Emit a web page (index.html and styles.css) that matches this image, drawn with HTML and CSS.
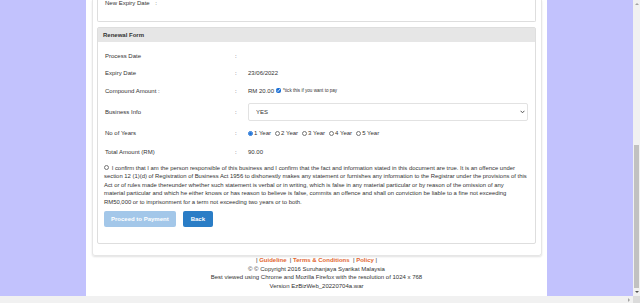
FILE: index.html
```html
<!DOCTYPE html>
<html lang="en">
<head>
  <meta charset="UTF-8">
  <meta name="viewport" content="width=device-width, initial-scale=1">
  <title>Renewal Form</title>
  <link rel="stylesheet" href="styles.css">
</head>
<body>
  <div class="screen">
    <div class="viewport">
      <div class="side"></div>

      <main class="page">
        <div class="well">
          <!-- tail of the details panel, scrolled up -->
          <section class="panel panel-top">
            <div class="expiry-line">New Expiry Date <span class="expiry-colon">:</span></div>
          </section>

          <!-- RENEWAL FORM -->
          <section class="panel">
            <h2 class="panel-head">Renewal Form</h2>
            <div class="panel-body">
              <div class="form-row row-process">
                <div class="label">Process Date</div>
                <div class="colon">:</div>
                <div class="value"></div>
              </div>
              <div class="form-row row-expiry">
                <div class="label">Expiry Date</div>
                <div class="colon">:</div>
                <div class="value">23/06/2022</div>
              </div>
              <div class="form-row row-compound">
                <div class="label">Compound Amount :</div>
                <div class="colon">:</div>
                <div class="value">RM 20.00 <input type="checkbox" class="tick" checked> <span class="note">*tick this if you want to pay</span></div>
              </div>
              <div class="form-row row-business">
                <div class="label">Business Info</div>
                <div class="colon">:</div>
                <div class="value">
                  <div class="select-wrap">
                    <select class="select">
                      <option>YES</option>
                      <option>NO</option>
                    </select>
                    <svg class="chevron" width="5" height="4" viewBox="0 0 5 4"><path d="M0.6 0.8 L2.5 2.8 L4.4 0.8" fill="none" stroke="#555" stroke-width="1"/></svg>
                  </div>
                </div>
              </div>
              <div class="form-row row-years">
                <div class="label">No of Years</div>
                <div class="colon">:</div>
                <div class="value years">
                  <label><input type="radio" name="years" checked> 1 Year</label>
                  <label><input type="radio" name="years"> 2 Year</label>
                  <label><input type="radio" name="years"> 3 Year</label>
                  <label><input type="radio" name="years"> 4 Year</label>
                  <label><input type="radio" name="years"> 5 Year</label>
                </div>
              </div>
              <div class="form-row row-total">
                <div class="label">Total Amount (RM)</div>
                <div class="colon">:</div>
                <div class="value">90.00</div>
              </div>

              <p class="declaration"><input type="checkbox" class="agree"> I confirm that I am the person responsible of this business and I confirm that the fact and information stated in this document are true. It is an offence under section 12 (1)(d) of Registration of Business Act 1956 to dishonestly makes any statement or furnishes any information to the Registrar under the provisions of this Act or of rules made thereunder whether such statement is verbal or in writing, which is false in any material particular or by reason of the omission of any<br>material particular and which he either knows or has reason to believe is false, commits an offence and shall on conviction be liable to a fine not exceeding<br>RM50,000 or to imprisonment for a term not exceeding two years or to both.</p>

              <div class="actions">
                <button class="btn btn-disabled" disabled>Proceed to Payment</button>
                <button class="btn">Back</button>
              </div>
            </div>
          </section>
        </div>

        <footer class="footer">
          <div>| <a href="#">Guideline</a> &nbsp;| <a href="#">Terms &amp; Conditions</a> &nbsp;| <a href="#">Policy</a> |</div>
          <div>&copy; &copy; Copyright 2016 Suruhanjaya Syarikat Malaysia</div>
          <div>Best viewed using Chrome and Mozilla Firefox with the resolution of 1024 x 768</div>
          <div>Version EzBizWeb_20220704a.war</div>
        </footer>
      </main>

      <div class="side"></div>
    </div>

    <!-- window scrollbars -->
    <div class="vscroll">
      <div class="arrow-up"></div>
      <div class="vtrack"><div class="vthumb"></div></div>
      <div class="arrow-down"></div>
    </div>
    <div class="hscroll">
      <div class="htrack"></div>
      <div class="arrow-right"></div>
    </div>
    <div class="corner"></div>
  </div>
</body>
</html>
```

FILE: styles.css
```css
/* Global */
* {
  box-sizing: border-box;
}
body {
  margin: 0;
  padding: 0;
  width: 640px;
  height: 303px;
  overflow: hidden;
  font-family: "Liberation Sans", Arial, sans-serif;
  font-size: 6px;
  color: #333;
  background: #fff;
}
.screen {
  display: grid;
  grid-template-columns: 633px 7px;
  grid-template-rows: 296px 7px;
  width: 640px;
  height: 303px;
}
.viewport {
  display: grid;
  grid-template-columns: 86px 461px 1fr;
  overflow: hidden;
}
.side {
  background: #c2c2fd;
}
.page {
  background: #fff;
}

/* Outer well */
.well {
  margin: 0 5px 0 6px;
  padding: 0 5px 11px 4px;
  border: 1px solid #e6e6e6;
  border-top: none;
  border-radius: 0 0 3px 3px;
  box-shadow: 0 1px 2px rgba(0, 0, 0, 0.12);
}

/* Panels */
.panel {
  border: 1px solid #dedede;
  border-radius: 2px;
  margin-top: 5px;
  background: #fff;
}
.panel-top {
  margin-top: 0;
  border-top: none;
  border-radius: 0 0 2px 2px;
  height: 22px;
  padding: 0 0 0 7px;
}
.expiry-line {
  line-height: 7px;
}
.expiry-colon {
  margin-left: 4px;
}
.panel-head {
  margin: 0;
  height: 14px;
  line-height: 14px;
  padding: 0 5px;
  font-size: 6px;
  font-weight: bold;
  background: #e6e6e6;
  color: #333;
}
.panel-body {
  padding: 5.5px 7px 16px 7px;
}

/* Form rows */
.form-row {
  display: grid;
  grid-template-columns: 130px 13px 1fr;
  align-items: center;
  height: 18px;
}
.row-process,
.row-expiry {
  height: 17px;
}
.row-business {
  height: 24px;
}
.row-years {
  height: 19px;
}
.value {
  display: flex;
  align-items: center;
  gap: 1px;
}
.tick {
  width: 5px;
  height: 5px;
  margin: 0 1px 0 1px;
  accent-color: #1a6fd6;
}
.note {
  font-size: 4.6px;
}
.select-wrap {
  position: relative;
  width: 100%;
}
.select {
  appearance: none;
  display: block;
  width: 100%;
  height: 18px;
  padding: 0 7px;
  font-family: inherit;
  font-size: 6px;
  color: #333;
  background: #fff;
  border: 1px solid #e2e2e2;
  border-radius: 2px;
}
.chevron {
  position: absolute;
  right: 3px;
  top: 7px;
}
.years {
  gap: 4px;
}
.years label {
  display: flex;
  align-items: center;
  gap: 1px;
}
.years input {
  width: 5px;
  height: 5px;
  margin: 0;
  accent-color: #1a6fd6;
}

/* Declaration */
.declaration {
  margin: 3px 0 0 -1px;
  font-size: 5.9px;
  line-height: 8.5px;
}
.agree {
  width: 5px;
  height: 5px;
  margin: 0 1px 0 0;
  vertical-align: 0;
}

/* Buttons */
.actions {
  display: flex;
  gap: 7px;
  margin: 5px 0 0 -1px;
}
.btn {
  height: 16px;
  padding: 0 8px;
  border: none;
  border-radius: 2px;
  font-family: inherit;
  font-size: 6px;
  font-weight: bold;
  color: #fff;
  background: #2a7dc6;
}
.btn-disabled {
  background: #a3c7e9;
  padding: 0 7px;
}

/* Footer */
.footer {
  text-align: center;
  line-height: 8.5px;
  padding-top: 0;
}
.footer a {
  color: #e2662f;
  font-weight: bold;
  text-decoration: none;
}

/* Scrollbars */
.vscroll {
  display: flex;
  flex-direction: column;
  background: #f1f1f1;
}
.arrow-up,
.arrow-down {
  height: 8px;
  display: flex;
  align-items: center;
  justify-content: center;
}
.arrow-up::before {
  content: "";
  border-left: 2px solid transparent;
  border-right: 2px solid transparent;
  border-bottom: 2px solid #a3a3a3;
}
.arrow-down::before {
  content: "";
  border-left: 2px solid transparent;
  border-right: 2px solid transparent;
  border-top: 2px solid #505050;
}
.vtrack {
  flex: 1;
  display: flex;
  flex-direction: column;
  padding: 137px 1px 0 1px;
}
.vthumb {
  flex: 1;
  background: #c1c1c1;
}
.hscroll {
  display: flex;
  background: #f1f1f1;
}
.htrack {
  flex: 1;
}
.arrow-right {
  width: 8px;
  display: flex;
  align-items: center;
  justify-content: center;
}
.arrow-right::before {
  content: "";
  border-top: 2px solid transparent;
  border-bottom: 2px solid transparent;
  border-left: 2px solid #a3a3a3;
}
.corner {
  background: #dcdcdc;
}
```
